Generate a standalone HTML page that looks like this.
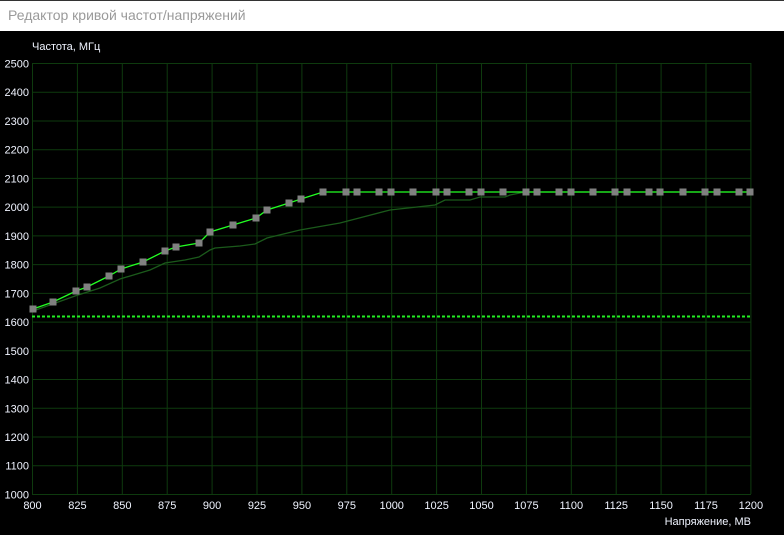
<!DOCTYPE html>
<html><head><meta charset="utf-8"><style>
html,body{margin:0;padding:0;width:784px;height:535px;overflow:hidden;background:#000}
.tb{position:absolute;left:0;top:0;width:784px;height:31px;background:#fff;border-top:1px solid #333;box-sizing:border-box}
.tb span{position:absolute;left:8px;top:6px;font:14px "Liberation Sans",sans-serif;color:#9a9a9a}
svg{position:absolute;left:0;top:0}
text{font-family:"Liberation Sans",sans-serif;font-size:11px;fill:#f0f4ff}
</style></head><body>
<div class="tb"><span>Редактор кривой частот/напряжений</span></div>
<svg width="784" height="535" viewBox="0 0 784 535">
<g stroke="#0e3a0e" stroke-width="1" fill="none" id="grid"></g>
<text x="32" y="50">Частота, МГц</text>
<text x="751" y="525" text-anchor="end">Напряжение, МВ</text>
<g id="labels"></g>
<line x1="32" y1="316.5" x2="751" y2="316.5" stroke="#22ee22" stroke-width="2" stroke-dasharray="3,2"/>
<polyline fill="none" stroke="#1b5a1b" stroke-width="1.3" points="33,311 75,296 100,288 120,279 150,270 165,263 185,260 199,257 210,250 215,248 240,246 255,244 267,238 300,230 340,223 390,210 435,205 445,200 470,200 480,197 505,197 510,195 525,192 751,192"/>
<polyline fill="none" stroke="#22ff22" stroke-width="1.3" id="main" points="33,309 53,302 76,291 87,287 109,276 121,269 143,262 165,251 176,247 199,243 210,232 233,225 256,218 267,210 289,203 301,199 323,192 751,192"/>
<g id="pts" fill="#808080"></g>
</svg>
<script>
var ns="http://www.w3.org/2000/svg",g=document.getElementById('grid'),lb=document.getElementById('labels');
function el(p,t,a,txt){var e=document.createElementNS(ns,t);for(var k in a)e.setAttribute(k,a[k]);if(txt)e.textContent=txt;p.appendChild(e);}
for(var i=0;i<=16;i++){var x=32.5+i*44.9;el(g,'line',{x1:x,y1:63,x2:x,y2:494});el(lb,'text',{x:x,y:509,'text-anchor':'middle'},String(800+i*25));}
for(var j=0;j<=15;j++){var y=63.5+j*28.73;el(g,'line',{x1:32,y1:y,x2:751,y2:y});el(lb,'text',{x:29,y:y+4,'text-anchor':'end'},String(2500-j*100));}
var pts=[[33,309],[53,302],[76,291],[87,287],[109,276],[121,269],[143,262],[165,251],[176,247],[199,243],[210,232],[233,225],[256,218],[267,210],[289,203],[301,199],[323,192]];
[346,357,379,391,413,436,447,469,481,503,526,537,559,571,593,615,627,649,660,683,705,717,739,750].forEach(function(x){pts.push([x,192]);});
var pg=document.getElementById('pts');pts.forEach(function(p){el(pg,'rect',{x:p[0]-3.5,y:p[1]-3.5,width:7,height:7});});
</script>
</body></html>
